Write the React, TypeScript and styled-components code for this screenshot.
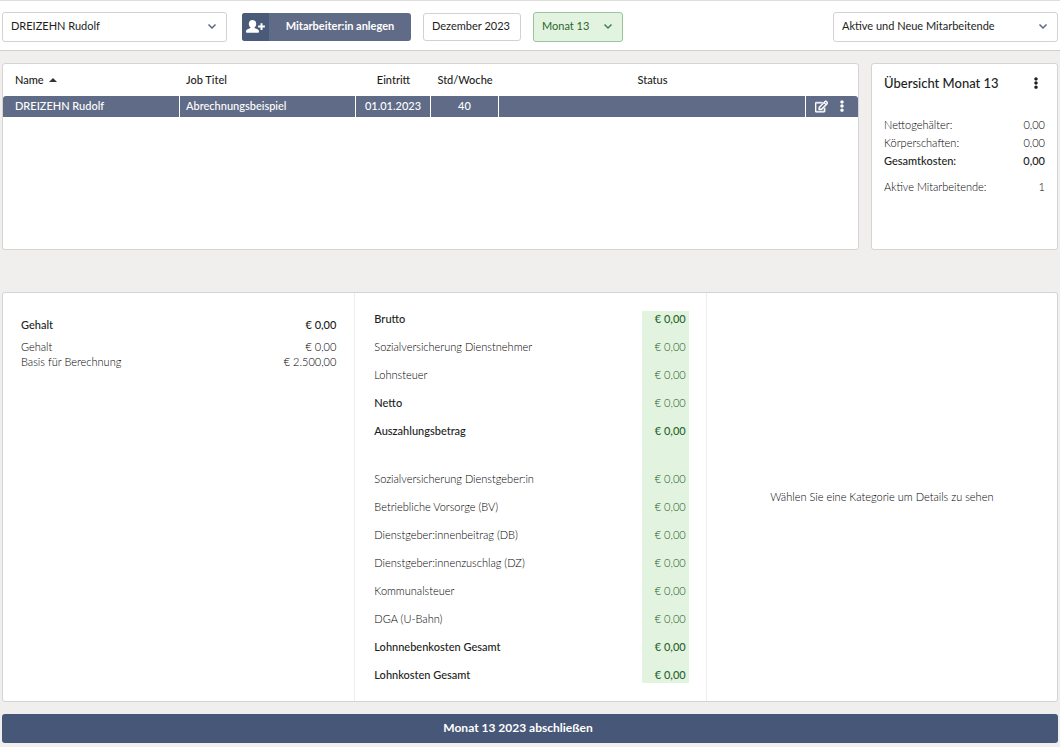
import React from "react";
import styled, { createGlobalStyle, css } from "styled-components";
import { FaRegEdit, FaEllipsisV } from "react-icons/fa";

const GlobalStyle = createGlobalStyle`
  *, *::before, *::after { box-sizing: border-box; }
  html, body { margin: 0; min-height: 100%; }
  body {
    background: #f0efee;
    color: #1c1e22;
    font-family: "Lato", sans-serif;
    font-size: 11px;
    font-weight: 400;
    line-height: 16px;
  }
  button, select, input { font: inherit; color: inherit; }
`;

const Page = styled.div`
  display: flex;
  flex-direction: column;
  min-height: 100vh;
`;

const Toolbar = styled.header`
  display: flex;
  align-items: center;
  gap: 12px;
  height: 51px;
  padding: 3px 2px 0;
  background: #fff;
  border-top: 1px solid #dedede;
  border-bottom: 1px solid #d0cfcf;
`;

const Picker = styled.label<{ $width: number; $green?: boolean }>`
  position: relative;
  display: flex;
  align-items: center;
  width: ${(p) => p.$width}px;
  color: ${(p) => (p.$green ? "#2c662d" : "#1c1e22")};

  select {
    appearance: none;
    width: 100%;
    height: 30px;
    padding: 0 24px 2px 8px;
    border: 1px solid ${(p) => (p.$green ? "#9cc3a0" : "#d2d2d3")};
    border-radius: 3px;
    background: ${(p) => (p.$green ? "#e2f3e0" : "#fff")};
  }
  svg {
    position: absolute;
    right: 10px;
    pointer-events: none;
    color: ${(p) => (p.$green ? "#3f7f5a" : "#5a6683")};
  }
`;

const MonthInput = styled.input`
  width: 98px;
  height: 28px;
  padding: 0 8px 3px;
  border: 1px solid #d2d2d3;
  border-radius: 3px;
  background: #fff;
`;

const AddButton = styled.button`
  display: flex;
  align-items: stretch;
  width: 169px;
  height: 28px;
  margin-left: 3px;
  padding: 0;
  overflow: hidden;
  border: 0;
  border-radius: 3px;
  background: #5f6b87;
  color: #fff;
  font-weight: 700;
`;

const AddIcon = styled.span`
  display: grid;
  place-items: center;
  width: 27px;
  padding-bottom: 2px;
  background: #4a5a79;
`;

const AddText = styled.span`
  flex: 1;
  align-self: center;
  padding-bottom: 2px;
  text-align: center;
`;

const Spacer = styled.div`
  flex: 1;
`;

const Main = styled.main`
  display: flex;
  flex: 1;
  flex-direction: column;
  padding: 12px 2px 4px;
`;

const panel = css`
  background: #fff;
  border: 1px solid #d4d4d5;
  border-radius: 3px;
`;

const TopRow = styled.div`
  display: grid;
  grid-template-columns: minmax(0, 1fr) 187px;
  gap: 12px;
  min-height: 187px;
  margin-bottom: 42px;
`;

const Staff = styled.section`
  ${panel}
`;

const StaffTable = styled.table`
  width: 100%;
  border-collapse: separate;
  border-spacing: 0;
  table-layout: fixed;
`;

const Col = styled.col<{ $width?: number }>`
  width: ${(p) => (p.$width ? `${p.$width}px` : "auto")};
`;

const Head = styled.th<{ $left?: boolean; $indent?: number }>`
  height: 32px;
  padding: 0 6px 0 ${(p) => p.$indent ?? 6}px;
  font-weight: 500;
  text-align: ${(p) => (p.$left ? "left" : "center")};
`;

const Cell = styled.td<{ $left?: boolean; $indent?: number }>`
  height: 21px;
  padding: 0 6px 1px ${(p) => p.$indent ?? 6}px;
  border-right: 1px solid #fff;
  background: #5f6b87;
  color: #fff;
  font-weight: 500;
  text-align: ${(p) => (p.$left ? "left" : "center")};
  &:first-child { border-top-left-radius: 3px; }
  &:last-child { border-right: 0; border-top-right-radius: 3px; }
`;

const SortArrow = styled.span`
  display: inline-block;
  margin: 0 0 2px 5px;
  border: 4px solid transparent;
  border-top: 0;
  border-bottom-color: #333;
`;

const Actions = styled.div`
  display: flex;
  align-items: center;
  justify-content: flex-end;
  gap: 8px;
  padding-right: 4px;
`;

const IconButton = styled.button`
  display: grid;
  place-items: center;
  padding: 0;
  border: 0;
  background: none;
`;

const EditIcon = styled(FaRegEdit)`
  path {
    stroke: currentColor;
    stroke-width: 24px;
  }
`;

const Overview = styled.aside`
  ${panel}
  padding: 10px 12px;
`;

const OverviewHead = styled.div`
  display: flex;
  align-items: center;
  justify-content: space-between;
  margin-bottom: 24px;
  padding-right: 3px;
`;

const OverviewTitle = styled.h2`
  margin: 0;
  font-size: 13px;
  font-weight: 500;
  line-height: 18px;
`;

const Line = styled.div<{ $strong?: boolean; $height?: number; $top?: number }>`
  display: flex;
  justify-content: space-between;
  margin-top: ${(p) => p.$top ?? 0}px;
  line-height: ${(p) => p.$height ?? 18}px;
  color: ${(p) => (p.$strong ? "#1c1e22" : "#000")};
  font-weight: ${(p) => (p.$strong ? 500 : 300)};
`;

const Details = styled.section`
  ${panel}
  display: grid;
  grid-template-columns: 1fr 1fr 1fr;
  flex: 1;
  min-height: 410px;
`;

const Column = styled.div`
  padding: 18px;
`;

const PayColumn = styled(Column)`
  padding: 18px 17px 18px 19px;
  border-left: 1px solid #ededee;
`;

const PayTable = styled.table`
  width: 100%;
  border-collapse: collapse;
`;

const PayGroup = styled.tbody`
  &:last-child tr:last-child > * { height: 16px; }
`;

const PayLabel = styled.th<{ $strong?: boolean }>`
  height: 28px;
  padding: 0;
  color: ${(p) => (p.$strong ? "#1c1e22" : "#000")};
  font-weight: ${(p) => (p.$strong ? 500 : 300)};
  text-align: left;
  vertical-align: top;
`;

const PayValue = styled.td<{ $strong?: boolean }>`
  width: 47px;
  padding: 0 3px 0 0;
  background: #e2f3e0;
  color: ${(p) => (p.$strong ? "#2c662d" : "#1f5a22")};
  font-weight: ${(p) => (p.$strong ? 500 : 300)};
  text-align: right;
  vertical-align: top;
`;

const PayGap = styled.td<{ $green?: boolean }>`
  height: 20px;
  padding: 0;
  background: ${(p) => (p.$green ? "#e2f3e0" : "transparent")};
`;

const Hint = styled(Column)`
  display: grid;
  place-items: center;
  border-left: 1px solid #ededee;
  color: #000;
  font-weight: 300;
  text-align: center;
`;

const CloseMonth = styled.button`
  height: 29px;
  margin-top: 12px;
  padding: 0 24px 2px 0;
  border: 0;
  border-radius: 3px;
  background: #465777;
  color: #fff;
  font-size: 12px;
  font-weight: 700;
`;

const Chevron = () => (
  <svg width="10" height="8" viewBox="0 0 10 8" fill="none" stroke="currentColor" strokeWidth="1.5" aria-hidden="true">
    <path d="M1.500 1.500 5 5 8.500 1.500" />
  </svg>
);

const UserPlus = () => (
  <svg width="19" height="13" viewBox="0 0 19 13" fill="currentColor" aria-hidden="true">
    <path d="M6.500 0C8.700 0 10.200 1.500 10.200 3.700c0 1.600-.7 3-1.700 3.700 0 .8.700 1 1.800 1.300 1.700.5 2.700 1.200 2.700 2.800 0 .9-.3 1.300-1.100 1.300H1.100C.3 12.800 0 12.400 0 11.500c0-1.600 1-2.300 2.700-2.800 1.100-.3 1.800-.5 1.800-1.300-1-.7-1.700-2.100-1.700-3.700C2.800 1.500 4.300 0 6.500 0z" />
    <path d="M14.500 3.200h2v2.400h2.400v2h-2.400V10h-2V7.600h-2.400v-2h2.400z" />
  </svg>
);

type Pay = { label: string; strong?: boolean; strongValue?: boolean };

const netPay: Pay[] = [
  { label: "Brutto", strong: true, strongValue: true },
  { label: "Sozialversicherung Dienstnehmer" },
  { label: "Lohnsteuer" },
  { label: "Netto", strong: true },
  { label: "Auszahlungsbetrag", strong: true, strongValue: true },
];

const employerPay: Pay[] = [
  { label: "Sozialversicherung Dienstgeber:in" },
  { label: "Betriebliche Vorsorge (BV)" },
  { label: "Dienstgeber:innenbeitrag (DB)" },
  { label: "Dienstgeber:innenzuschlag (DZ)" },
  { label: "Kommunalsteuer" },
  { label: "DGA (U-Bahn)" },
  { label: "Lohnnebenkosten Gesamt", strong: true, strongValue: true },
  { label: "Lohnkosten Gesamt", strong: true, strongValue: true },
];

const PayRow = ({ label, strong, strongValue }: Pay) => (
  <tr>
    <PayLabel scope="row" $strong={strong}>{label}</PayLabel>
    <PayValue $strong={strongValue}>€ 0,00</PayValue>
  </tr>
);

export default function App() {
  return (
    <>
      <GlobalStyle />
      <Page>
        <Toolbar>
          <Picker $width={225}>
            <select aria-label="Mitarbeiter:in"><option>DREIZEHN Rudolf</option></select>
            <Chevron />
          </Picker>
          <AddButton>
            <AddIcon><UserPlus /></AddIcon>
            <AddText>Mitarbeiter:in anlegen</AddText>
          </AddButton>
          <MonthInput aria-label="Monat" defaultValue="Dezember 2023" />
          <Picker $width={90} $green>
            <select aria-label="Abrechnungsmonat"><option>Monat 13</option></select>
            <Chevron />
          </Picker>
          <Spacer />
          <Picker $width={225}>
            <select aria-label="Filter"><option>Aktive und Neue Mitarbeitende</option></select>
            <Chevron />
          </Picker>
        </Toolbar>
        <Main>
          <TopRow>
            <Staff>
              <StaffTable>
                <colgroup>
                  <Col $width={177} />
                  <Col $width={176} />
                  <Col $width={75} />
                  <Col $width={68} />
                  <Col />
                  <Col $width={52} />
                </colgroup>
                <thead>
                  <tr>
                    <Head scope="col" $left $indent={12}>Name<SortArrow /></Head>
                    <Head scope="col" $left>Job Titel</Head>
                    <Head scope="col">Eintritt</Head>
                    <Head scope="col">Std/Woche</Head>
                    <Head scope="col">Status</Head>
                    <Head as="td" />
                  </tr>
                </thead>
                <tbody>
                  <tr>
                    <Cell $left $indent={12}>DREIZEHN Rudolf</Cell>
                    <Cell $left>Abrechnungsbeispiel</Cell>
                    <Cell>01.01.2023</Cell>
                    <Cell>40</Cell>
                    <Cell />
                    <Cell>
                      <Actions>
                        <IconButton aria-label="Bearbeiten"><EditIcon size={13} /></IconButton>
                        <IconButton aria-label="Mehr"><FaEllipsisV size={12} /></IconButton>
                      </Actions>
                    </Cell>
                  </tr>
                </tbody>
              </StaffTable>
            </Staff>
            <Overview>
              <OverviewHead>
                <OverviewTitle>Übersicht Monat 13</OverviewTitle>
                <IconButton aria-label="Mehr"><FaEllipsisV size={12} /></IconButton>
              </OverviewHead>
              <Line><span>Nettogehälter:</span><span>0,00</span></Line>
              <Line><span>Körperschaften:</span><span>0,00</span></Line>
              <Line $strong><span>Gesamtkosten:</span><span>0,00</span></Line>
              <Line $top={8}><span>Aktive Mitarbeitende:</span><span>1</span></Line>
            </Overview>
          </TopRow>
          <Details>
            <Column>
              <Line $strong $height={28}><span>Gehalt</span><span>€ 0,00</span></Line>
              <Line $height={15}><span>Gehalt</span><span>€ 0,00</span></Line>
              <Line $height={15}><span>Basis für Berechnung</span><span>€ 2.500,00</span></Line>
            </Column>
            <PayColumn>
              <PayTable>
                <PayGroup>
                  {netPay.map((p) => <PayRow key={p.label} {...p} />)}
                  <tr><PayGap /><PayGap $green /></tr>
                </PayGroup>
                <PayGroup>
                  {employerPay.map((p) => <PayRow key={p.label} {...p} />)}
                </PayGroup>
              </PayTable>
            </PayColumn>
            <Hint>Wählen Sie eine Kategorie um Details zu sehen</Hint>
          </Details>
          <CloseMonth>Monat 13 2023 abschließen</CloseMonth>
        </Main>
      </Page>
    </>
  );
}
